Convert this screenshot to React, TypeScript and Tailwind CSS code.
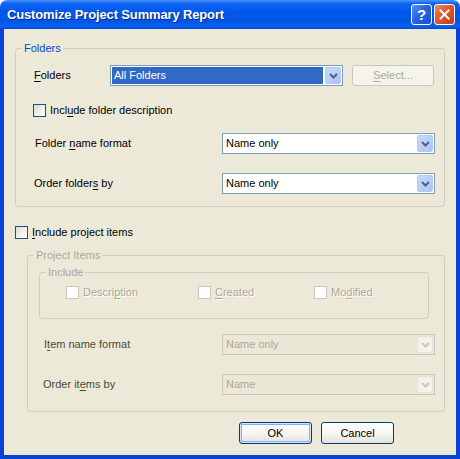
import React from 'react';
import clsx from 'clsx';

// Windows XP (Luna) style dialog: Customize Project Summary Report

const Mn: React.FC<{ children: React.ReactNode }> = ({ children }) => <span className="underline underline-offset-[2px]">{children}</span>;

function Chevron({ disabled }: { disabled?: boolean }) {
  return (
    <svg width="9" height="6" viewBox="0 0 9 6">
      <path d="M1 1 L4.5 4.5 L8 1" fill="none" stroke={disabled ? '#c9c7ba' : '#4d6185'} strokeWidth="2" />
    </svg>
  );
}

function Combo({ value, className, selected, disabled }: { value: string; className: string; selected?: boolean; disabled?: boolean }) {
  return (
    <div
      className={clsx(
        'flex h-[21px] shrink-0 items-stretch border p-px',
        disabled ? 'border-[#c9c7ba] bg-[#ebe8d8]' : 'border-[#7f9db9] bg-white',
        className
      )}
    >
      <div
        className={clsx(
          'mr-[2px] flex flex-1 items-center pl-[2px]',
          selected && 'bg-[#316ac5] text-white',
          disabled && 'text-[#aca899]'
        )}
      >
        {value}
      </div>
      <div
        className={clsx(
          'flex w-[16px] items-center justify-center rounded-[2px] border',
          disabled
            ? 'border-[#e6e4da] bg-[#f3f2ec]'
            : 'border-[#b6c9f3] bg-[linear-gradient(135deg,#c6d8fd_0%,#b7cdf8_60%,#a9c1f5_100%)]'
        )}
      >
        <Chevron disabled={disabled} />
      </div>
    </div>
  );
}

function CheckBox({ label, disabled, gap }: { label: React.ReactNode; disabled?: boolean; gap: string }) {
  return (
    <div className={clsx('flex items-center', gap)}>
      <div
        className={clsx(
          'h-[13px] w-[13px] shrink-0 border',
          disabled ? 'border-[#cac8bb] bg-white' : 'border-[#1c5180] bg-[linear-gradient(135deg,#dcdcd7_0%,#ffffff_100%)]'
        )}
      />
      <span className={clsx('leading-[13px]', disabled && 'text-[#aca899] [text-shadow:1px_1px_0_#ffffff]')}>{label}</span>
    </div>
  );
}

function XPButton({ children, isDefault }: { children: React.ReactNode; isDefault?: boolean }) {
  return (
    <button
      className={clsx(
        'flex h-[22px] w-[73px] items-center justify-center rounded-[3px] border border-[#003c74] bg-[linear-gradient(to_bottom,#ffffff_0%,#f4f3ee_60%,#e3e1d7_100%)] text-black',
        isDefault && 'shadow-[inset_0_0_0_1px_#cee7ff,inset_0_0_0_2px_#8fadec]'
      )}
    >
      {children}
    </button>
  );
}

export default function App() {
  return (
    <div className="flex h-[459px] w-[460px] flex-col font-['Liberation_Sans',Arial,sans-serif] text-[11px] text-black">
      {/* Title bar */}
      <div className="flex h-[29px] shrink-0 items-center rounded-t-[7px] bg-[linear-gradient(to_bottom,#4a96fb_0%,#0e63f3_12%,#0058ea_40%,#0056e6_75%,#0a60f0_92%,#0045cf_100%)] pl-[7px] pr-[5px]">
        <span className="flex-1 text-[13px] font-bold tracking-[-0.15px] text-white [text-shadow:1px_1px_0_#0b2a8a]">Customize Project Summary Report</span>
        <div className="flex gap-[2px]">
          <div className="flex h-[21px] w-[21px] items-center justify-center rounded-[3px] border border-white bg-[linear-gradient(135deg,#5a92f5_0%,#2862e6_45%,#1a4fd6_100%)] text-[15px] font-bold leading-none text-white">
            ?
          </div>
          <div className="flex h-[21px] w-[21px] items-center justify-center rounded-[3px] border border-white bg-[linear-gradient(135deg,#f08a63_0%,#e0562c_45%,#c43d12_100%)]">
            <svg width="11" height="11" viewBox="0 0 11 11">
              <path d="M1.5 1.5 L9.5 9.5 M9.5 1.5 L1.5 9.5" stroke="#ffffff" strokeWidth="2" strokeLinecap="square" />
            </svg>
          </div>
        </div>
      </div>

      {/* Client area */}
      <div className="flex flex-1 flex-col border-x-4 border-b-4 border-[#0842d6] bg-[#ece9d8]">
        {/* Folders */}
        <fieldset className="ml-[11px] mt-[13px] w-[430px] rounded-[3px] border border-[#d0d0bf] pb-[12px] pl-[18px]">
          <legend className="ml-[-12px] px-[2px] leading-[13px] text-[#0046d5]">Folders</legend>
          <div className="mt-[10px] flex items-center">
            <span className="w-[76px]">
              <Mn>F</Mn>olders
            </span>
            <Combo value="All Folders" selected className="w-[233px]" />
            <div className="ml-[9px] flex h-[21px] w-[82px] items-center justify-center rounded-[3px] border border-[#c9c7ba] bg-[#f5f4ea] text-[#aca899]">
              <Mn>S</Mn>elect...
            </div>
          </div>
          <div className="mt-[18px] -ml-px">
            <CheckBox gap="gap-[4px]" label={<>Incl<Mn>u</Mn>de folder description</>} />
          </div>
          <div className="mt-[16px] flex items-center">
            <span className="w-[188px] pl-px">
              Folder <Mn>n</Mn>ame format
            </span>
            <Combo value="Name only" className="w-[213px]" />
          </div>
          <div className="mt-[19px] flex items-center">
            <span className="w-[188px]">
              Order folder<Mn>s</Mn> by
            </span>
            <Combo value="Name only" className="w-[213px]" />
          </div>
        </fieldset>

        {/* Include project items */}
        <div className="ml-[11px] mt-[19px]">
          <CheckBox gap="gap-[4px]" label={<><Mn>I</Mn>nclude project items</>} />
        </div>

        {/* Project Items (disabled) */}
        <fieldset className="ml-[23px] mt-[10px] w-[418px] rounded-[3px] border border-[#d0d0bf] pb-[16px]">
          <legend className="ml-[6px] px-[2px] leading-[13px] text-[#aca899]">Project Items</legend>
          <fieldset className="ml-[11px] mt-[4px] w-[390px] rounded-[3px] border border-[#d0d0bf] pb-[19px] pl-[26px]">
            <legend className="ml-[-20px] px-[2px] leading-[13px] text-[#aca899]">Include</legend>
            <div className="mt-[7px] flex">
              <div className="w-[132px]">
                <CheckBox disabled gap="gap-[4px]" label={<>Descri<Mn>p</Mn>tion</>} />
              </div>
              <div className="w-[116px]">
                <CheckBox disabled gap="gap-[4px]" label={<><Mn>C</Mn>reated</>} />
              </div>
              <div>
                <CheckBox disabled gap="gap-[4px]" label={<>Mo<Mn>d</Mn>ified</>} />
              </div>
            </div>
          </fieldset>
          <div className="mt-[15px] flex items-center pl-[16px] text-[#4a4a36]">
            <span className="w-[178px]">
              I<Mn>t</Mn>em name format
            </span>
            <Combo value="Name only" disabled className="w-[213px]" />
          </div>
          <div className="mt-[19px] flex items-center pl-[15px] text-[#4a4a36]">
            <span className="w-[179px]">
              Order it<Mn>e</Mn>ms by
            </span>
            <Combo value="Name" disabled className="w-[213px]" />
          </div>
        </fieldset>

        {/* Buttons */}
        <div className="mt-[10px] flex justify-end gap-[9px] pr-[62px]">
          <XPButton isDefault>OK</XPButton>
          <XPButton>Cancel</XPButton>
        </div>
      </div>
    </div>
  );
}
